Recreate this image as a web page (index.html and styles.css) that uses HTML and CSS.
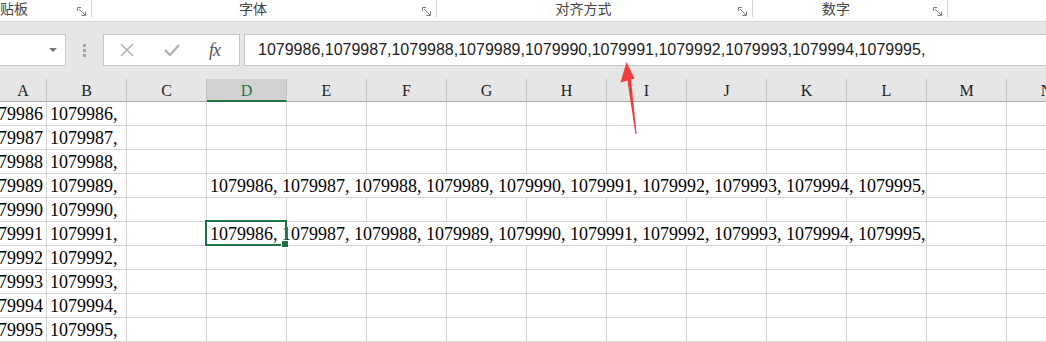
FILE: index.html
```html
<!DOCTYPE html>
<html>
<head>
    <title>Sheet1</title>
    <link rel="stylesheet" href="styles.css">
</head>
<body>
    <div class="ribbon">
        <div class="group g-clip">
            <span class="glabel">剪贴板</span>
            <svg class="launcher" width="9" height="9" viewBox="0 0 9 9"><path d="M0.5 4V0.5H4M2 2L8 8M8.5 4.5V8.5H4.5" fill="none" stroke="#7a7a7a"/></svg>
        </div>
        <div class="group g-font">
            <span class="glabel">字体</span>
            <svg class="launcher" width="9" height="9" viewBox="0 0 9 9"><path d="M0.5 4V0.5H4M2 2L8 8M8.5 4.5V8.5H4.5" fill="none" stroke="#7a7a7a"/></svg>
        </div>
        <div class="group g-align">
            <span class="glabel">对齐方式</span>
            <svg class="launcher" width="9" height="9" viewBox="0 0 9 9"><path d="M0.5 4V0.5H4M2 2L8 8M8.5 4.5V8.5H4.5" fill="none" stroke="#7a7a7a"/></svg>
        </div>
        <div class="group g-num">
            <span class="glabel">数字</span>
            <svg class="launcher" width="9" height="9" viewBox="0 0 9 9"><path d="M0.5 4V0.5H4M2 2L8 8M8.5 4.5V8.5H4.5" fill="none" stroke="#7a7a7a"/></svg>
        </div>
    </div>

    <div class="toolbar">
        <div class="namebox"><span class="caret"></span></div>
        <div class="grip"><i></i><i></i><i></i></div>
        <div class="fbuttons">
            <svg width="14" height="14" viewBox="0 0 14 14"><path d="M1 1L13 13M13 1L1 13" stroke="#b4b4b4" stroke-width="1.6"/></svg>
            <svg width="16" height="12" viewBox="0 0 16 12"><path d="M1 6L6 11L15 1" fill="none" stroke="#b4b4b4" stroke-width="2.4"/></svg>
            <span class="fx">fx</span>
        </div>
        <div class="finput">1079986,1079987,1079988,1079989,1079990,1079991,1079992,1079993,1079994,1079995,</div>
    </div>

    <div class="sheet-wrap">
        <div class="sheet">
            <div class="hd">A</div><div class="hd">B</div><div class="hd">C</div><div class="hd active">D</div><div class="hd">E</div><div class="hd">F</div><div class="hd">G</div><div class="hd">H</div><div class="hd">I</div><div class="hd">J</div><div class="hd">K</div><div class="hd">L</div><div class="hd">M</div><div class="hd">N</div>

            <div class="c num">1079986</div><div class="c">1079986,</div><div class="c"></div><div class="c"></div><div class="c"></div><div class="c"></div><div class="c"></div><div class="c"></div><div class="c"></div><div class="c"></div><div class="c"></div><div class="c"></div><div class="c"></div><div class="c"></div>
            <div class="c num">1079987</div><div class="c">1079987,</div><div class="c"></div><div class="c"></div><div class="c"></div><div class="c"></div><div class="c"></div><div class="c"></div><div class="c"></div><div class="c"></div><div class="c"></div><div class="c"></div><div class="c"></div><div class="c"></div>
            <div class="c num">1079988</div><div class="c">1079988,</div><div class="c"></div><div class="c"></div><div class="c"></div><div class="c"></div><div class="c"></div><div class="c"></div><div class="c"></div><div class="c"></div><div class="c"></div><div class="c"></div><div class="c"></div><div class="c"></div>
            <div class="c num">1079989</div><div class="c">1079989,</div><div class="c"></div><div class="c wide">1079986, 1079987, 1079988, 1079989, 1079990, 1079991, 1079992, 1079993, 1079994, 1079995,</div><div class="c"></div><div class="c"></div>
            <div class="c num">1079990</div><div class="c">1079990,</div><div class="c"></div><div class="c"></div><div class="c"></div><div class="c"></div><div class="c"></div><div class="c"></div><div class="c"></div><div class="c"></div><div class="c"></div><div class="c"></div><div class="c"></div><div class="c"></div>
            <div class="c num">1079991</div><div class="c">1079991,</div><div class="c"></div><div class="c wide">1079986, 1079987, 1079988, 1079989, 1079990, 1079991, 1079992, 1079993, 1079994, 1079995,<span class="selection"><i class="handle"></i></span></div><div class="c"></div><div class="c"></div>
            <div class="c num">1079992</div><div class="c">1079992,</div><div class="c"></div><div class="c"></div><div class="c"></div><div class="c"></div><div class="c"></div><div class="c"></div><div class="c"></div><div class="c"></div><div class="c"></div><div class="c"></div><div class="c"></div><div class="c"></div>
            <div class="c num">1079993</div><div class="c">1079993,</div><div class="c"></div><div class="c"></div><div class="c"></div><div class="c"></div><div class="c"></div><div class="c"></div><div class="c"></div><div class="c"></div><div class="c"></div><div class="c"></div><div class="c"></div><div class="c"></div>
            <div class="c num">1079994</div><div class="c">1079994,</div><div class="c"></div><div class="c"></div><div class="c"></div><div class="c"></div><div class="c"></div><div class="c"></div><div class="c"></div><div class="c"></div><div class="c"></div><div class="c"></div><div class="c"></div><div class="c"></div>
            <div class="c num">1079995</div><div class="c">1079995,</div><div class="c"></div><div class="c"></div><div class="c"></div><div class="c"></div><div class="c"></div><div class="c"></div><div class="c"></div><div class="c"></div><div class="c"></div><div class="c"></div><div class="c"></div><div class="c"></div>
        </div>
    </div>

    <svg class="arrow" width="20" height="76" viewBox="0 0 20 76">
        <path d="M7.5 0L15.5 16.5L12 17.5L17.6 72L16.4 72L8.4 18.5L1.5 20.5Z" fill="#f23b3b"/>
    </svg>
</body>
</html>
```

FILE: styles.css
```css
body {
    margin: 0;
    width: 1046px;
    height: 342px;
    overflow: hidden;
    background-color: #fff;
    position: relative;
    font-family: "Liberation Sans", Arial, sans-serif;
}

/* ribbon group labels */
.ribbon {
    display: flex;
    height: 21px;
    background-color: #fff;
    border-bottom: 1px solid #d4d4d4;
}

.group {
    display: flex;
    align-items: flex-start;
    height: 17px;
    border-right: 1px solid #d4d4d4;
    box-sizing: border-box;
}

.glabel {
    flex: 1;
    text-align: center;
    font-family: "Noto Sans CJK SC", sans-serif;
    font-size: 14px;
    line-height: 17px;
    color: #444;
    white-space: nowrap;
}

.launcher {
    margin-top: 7px;
    margin-right: 5px;
}

.g-clip { width: 92px; }
.g-clip .glabel { flex: none; margin-left: -14px; margin-right: auto; }
.g-font { width: 345px; }
.g-font .glabel { margin-right: 8px; }
.g-align { width: 316px; }
.g-align .glabel { margin-right: 8px; }
.g-num { width: 195px; }
.g-num .glabel { margin-right: 14px; }

/* formula bar */
.toolbar {
    display: flex;
    align-items: flex-start;
    height: 57px;
    padding-top: 12px;
    box-sizing: border-box;
    background-color: #e6e6e6;
}

.namebox,
.fbuttons,
.finput {
    height: 32px;
    box-sizing: border-box;
    background-color: #fff;
    border: 1px solid #c6c6c6;
}

.namebox {
    width: 67px;
    margin-left: -1px;
    position: relative;
}

.caret {
    position: absolute;
    right: 8px;
    top: 13px;
    border-left: 4px solid transparent;
    border-right: 4px solid transparent;
    border-top: 4px solid #777;
}

.grip {
    display: flex;
    flex-direction: column;
    gap: 2px;
    width: 3px;
    margin: 10px 17px 0 17px;
}

.grip i {
    width: 3px;
    height: 3px;
    background-color: #a6a6a6;
}

.fbuttons {
    display: flex;
    align-items: center;
    width: 137px;
    padding-left: 16px;
    gap: 30px;
}

.fx {
    font-family: "Liberation Serif", serif;
    font-style: italic;
    font-size: 18px;
    color: #555;
    margin-left: -1px;
    letter-spacing: -1px;
}

.finput {
    flex: 1;
    margin-left: 4px;
    border-right: none;
    padding-left: 13px;
    font-size: 16px;
    line-height: 30px;
    color: #222;
    white-space: nowrap;
}

/* sheet grid */
.sheet-wrap {
    overflow: hidden;
    width: 1046px;
}

.sheet {
    display: grid;
    grid-template-columns: 47px repeat(13, 80px);
    grid-template-rows: 23px repeat(10, 24px);
    width: 1087px;
}

.hd {
    background-color: #e6e6e6;
    border-right: 1px solid #c4c4c4;
    border-bottom: 1px solid #ababab;
    box-sizing: border-box;
    text-align: center;
    font-family: "Liberation Serif", serif;
    font-size: 16px;
    line-height: 23px;
    color: #222;
}

.hd.active {
    background-color: #d2d2d2;
    border-bottom: 2px solid #217346;
    color: #217346;
}

.c {
    border-right: 1px solid #d4d4d4;
    border-bottom: 1px solid #d4d4d4;
    box-sizing: border-box;
    padding: 0 3px;
    font-family: "Liberation Serif", serif;
    font-size: 18px;
    line-height: 25px;
    color: #000;
    white-space: nowrap;
    overflow: hidden;
}

.c.num {
    text-align: right;
    direction: rtl;
}

.c.wide {
    grid-column: span 9;
    position: relative;
    overflow: visible;
}

.selection {
    position: absolute;
    left: -2px;
    top: -2px;
    width: 82px;
    height: 26px;
    border: 2px solid #217346;
    box-sizing: border-box;
}

.handle {
    position: absolute;
    right: -4px;
    bottom: -4px;
    width: 6px;
    height: 6px;
    background-color: #217346;
    border: 1px solid #fff;
}

.arrow {
    position: absolute;
    left: 619px;
    top: 62px;
}
```
